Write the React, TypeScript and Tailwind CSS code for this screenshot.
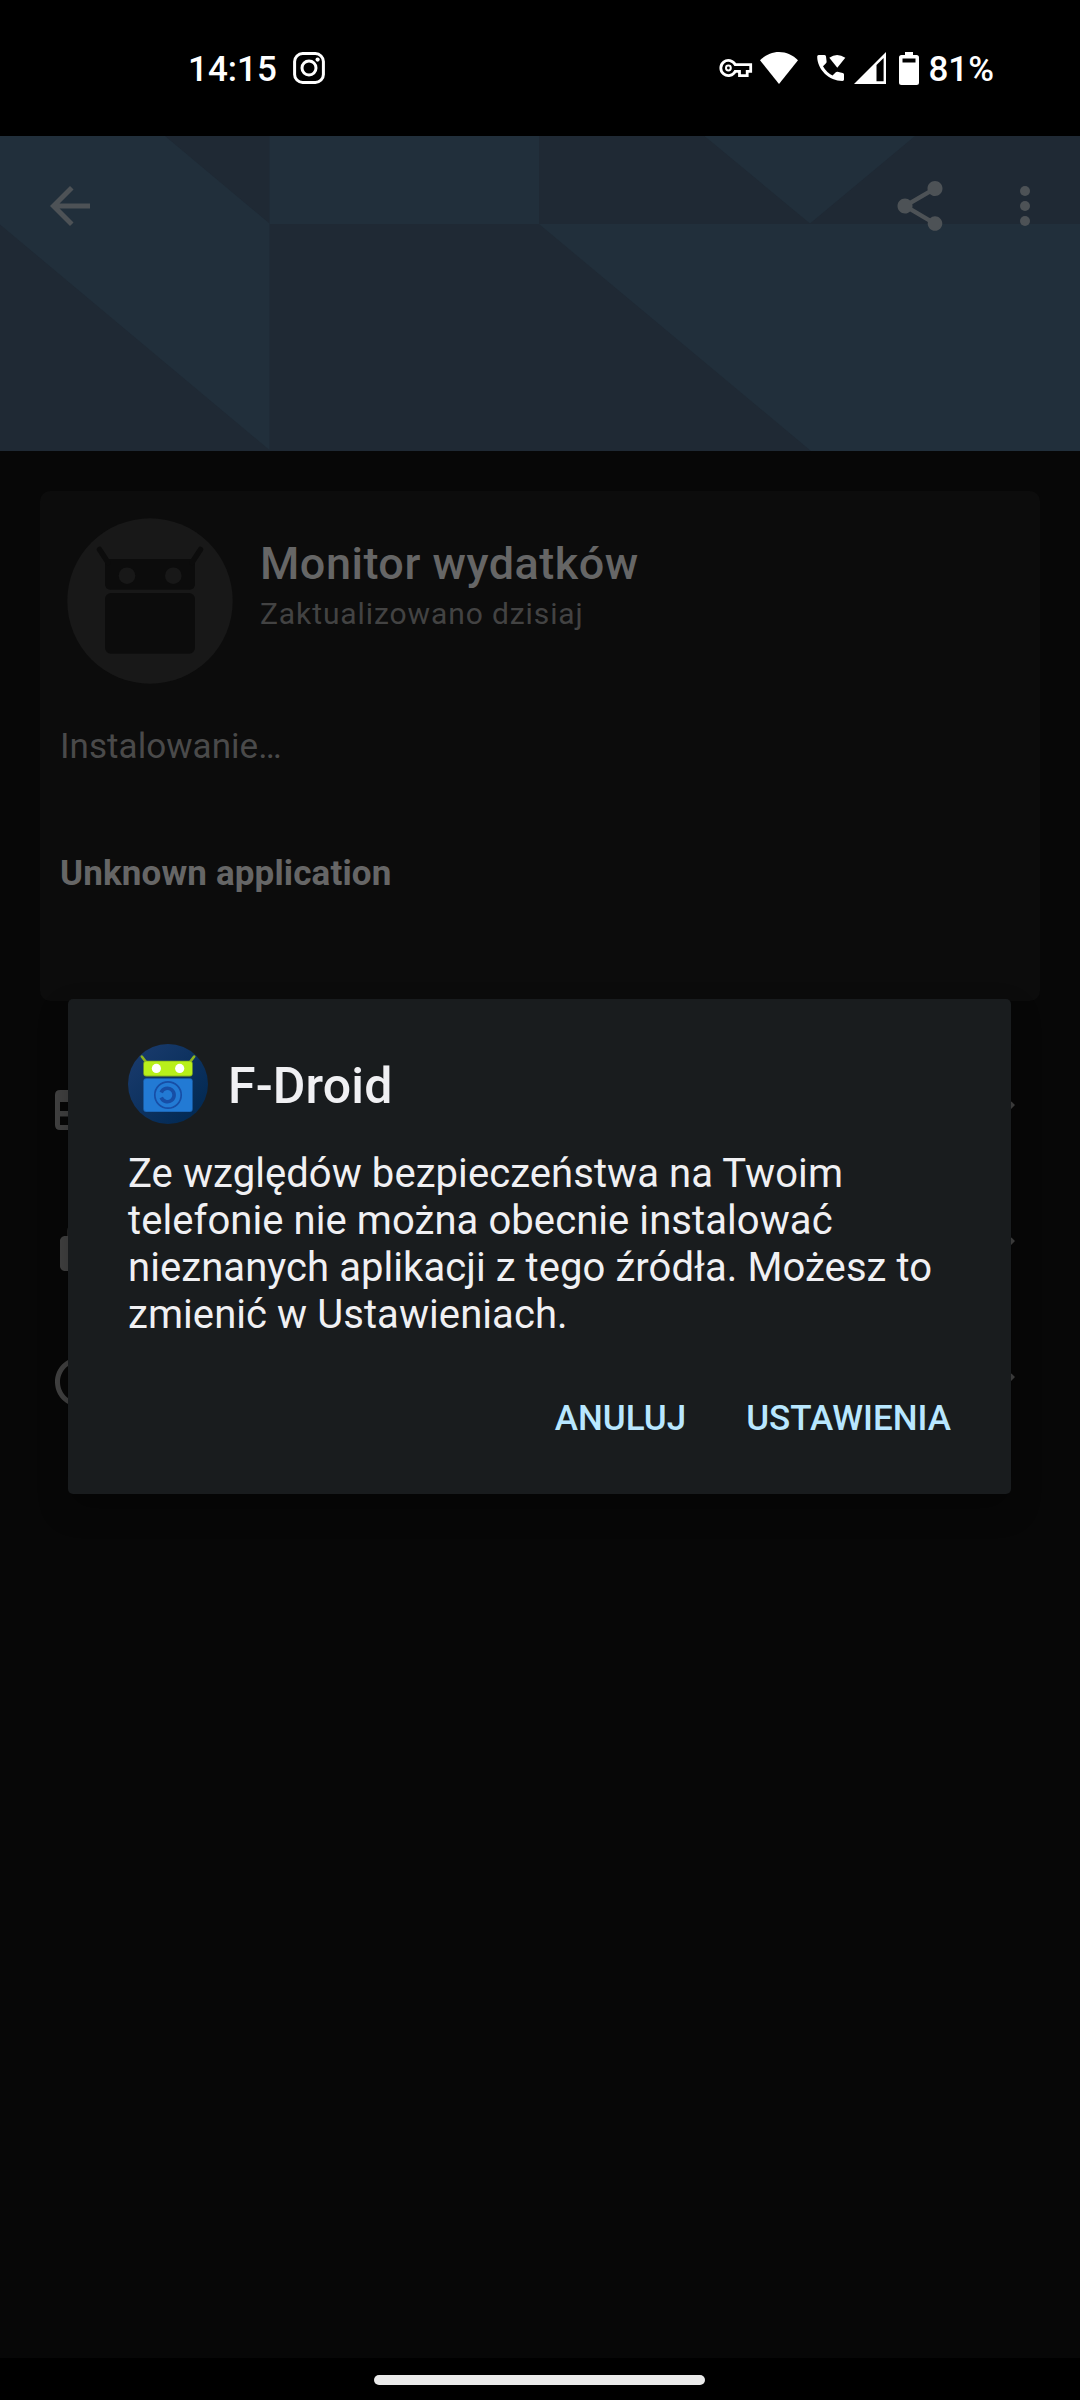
import React from "react";

const ICON = "h-[60px] w-[60px] shrink-0";

function StatusBar() {
  return (
    <header className="flex h-[136px] shrink-0 items-center bg-black pl-[188px] pr-[86px] text-[35px] font-medium text-white">
      <span className="relative top-[2px] w-[105px] leading-[42px]">14:15</span>
      <svg className="h-8 w-8" viewBox="0 0 32 32" fill="none" stroke="currentColor">
        <rect x="1.6" y="1.6" width="28.8" height="28.8" rx="8" strokeWidth="3" />
        <circle cx="16" cy="16" r="7" strokeWidth="3" />
        <circle cx="24.6" cy="7.6" r="2.1" fill="currentColor" stroke="none" />
      </svg>
      <div className="ml-auto flex items-center">
        <svg className="mr-[7px] h-[20px] w-[34px]" viewBox="0 0 34 20" fill="none" stroke="currentColor" strokeWidth="2.8">
          <path d="M16.2 6.6A7.6 7.6 0 1 0 16.2 13.4H20.5V17.7H28.2V13.4H31.7V6.6Z" />
          <circle cx="9.4" cy="10" r="2.4" strokeWidth="2" />
        </svg>
        <svg className="mr-[19px] h-[32px] w-[38px]" viewBox="0 0 38 32" fill="currentColor">
          <path d="M0 8.2C5 3.300 11.600 0 19 0s14 3.300 19 8.200L19 32Z" />
        </svg>
        <svg className="mr-[8px] h-[28px] w-[29px]" viewBox="0 0 29 28" fill="currentColor">
          <path d="M1.600 1H7.500Q9 1 9 2.500L9.600 7.500Q9.700 8.500 9 9.200L6 12.200A23 23 0 0 0 15.500 21.500L18.800 18.300Q19.500 17.600 20.500 17.800L25.700 18.900Q27 19.100 27 20.500V25.600Q27 27 25.500 27C12 27 .2 15.500.2 2.500Q.2 1 1.600 1Z" />
          <path d="M12.300 3.800Q20 -1.800 28.300 3.800L20.300 13.800Z" />
        </svg>
        <svg className="mr-[13px] h-[32px] w-[32px]" viewBox="0 0 32 32">
          <path d="M0 32L32 0V32Z" fill="currentColor" />
          <path d="M22.500 13L29.600 6V29.200H22.500Z" fill="#000" />
        </svg>
        <svg className="mr-[9px] h-[33px] w-[20px]" viewBox="0 0 20 33">
          <path d="M6 0h8v3h3.500Q20 3 20 5.500v25Q20 33 17.500 33h-15Q0 33 0 30.500v-25Q0 3 2.500 3H6Z" fill="currentColor" />
          <path d="M3.500 6.500h13v4h-13z" fill="#000" />
        </svg>
        <span className="relative top-[2px] leading-[42px]">81%</span>
      </div>
    </header>
  );
}

function Banner() {
  return (
    <div className="relative h-[315px] shrink-0 overflow-hidden bg-[#1f2934]">
      <svg className="absolute inset-0 h-[315px] w-[1080px]" viewBox="0 136 1080 315" fill="#212f3b">
        <path d="M0 136H165L269.500 223.500V450L0 224.500Z" />
        <path d="M269.500 136H539V224H269.500Z" />
        <path d="M704.500 136H915L810 223.500Z" />
        <path d="M539 224H1080V451H811Z" />
      </svg>
      <div className="relative flex h-[140px] items-center pl-10 pr-[25px] text-[#4d5256]">
        <svg className={ICON} viewBox="0 0 24 24" fill="currentColor">
          <path d="M20 11H7.830l5.590-5.590L12 4l-8 8 8 8 1.410-1.410L7.830 13H20v-2z" />
        </svg>
        <svg className={ICON + " ml-auto"} viewBox="0 0 24 24" fill="currentColor">
          <path d="M18 16.080c-.76 0-1.440.3-1.960.77L8.910 12.700c.05-.23.09-.46.09-.7s-.04-.47-.09-.7l7.050-4.110c.54.5 1.250.81 2.040.81 1.660 0 3-1.340 3-3s-1.340-3-3-3-3 1.340-3 3c0 .24.04.47.09.7L8.040 9.810C7.500 9.310 6.790 9 6 9c-1.660 0-3 1.340-3 3s1.340 3 3 3c.79 0 1.500-.31 2.040-.81l7.120 4.160c-.05.21-.08.43-.08.65 0 1.610 1.310 2.920 2.920 2.920s2.920-1.310 2.920-2.920-1.310-2.920-2.920-2.920z" />
        </svg>
        <svg className={ICON + " ml-[45px]"} viewBox="0 0 24 24" fill="currentColor">
          <circle cx="12" cy="6" r="2" />
          <circle cx="12" cy="12" r="2" />
          <circle cx="12" cy="18" r="2" />
        </svg>
      </div>
    </div>
  );
}

function AppCard() {
  return (
    <section className="mx-10 mt-10 h-[510px] shrink-0 rounded-[10px] bg-[#0c0c0c] text-[#666]">
      <div className="flex pl-[27px] pt-[27px]">
        <svg className="h-[166px] w-[166px]" viewBox="67 518 166 166">
          <circle cx="150" cy="601" r="82.700" fill="#181818" />
          <g fill="#0c0c0c">
            <path d="M105 559H195V584Q195 589.700 189.500 589.700H110.500Q105 589.700 105 584Z" />
            <rect x="105" y="593" width="90" height="60.700" rx="6" />
            <path d="M99.500 549.500L108 562.500M200.500 549.500L192 562.500" stroke="#0c0c0c" strokeWidth="5.500" strokeLinecap="round" />
          </g>
          <circle cx="127" cy="575.700" r="8.300" fill="#181818" />
          <circle cx="173.300" cy="575.700" r="8.300" fill="#181818" />
        </svg>
        <div className="pl-[27px] pt-[20px]">
          <h1 className="text-[45px] font-medium leading-[52px] tracking-[0.5px]">Monitor wydatków</h1>
          <p className="mt-[6px] text-[30px] leading-[36px] tracking-[0.9px] text-[#434343]">Zaktualizowano dzisiaj</p>
        </div>
      </div>
      <div className="pl-5 pt-[42px] text-[35px] leading-[42px]">
        <p className="tracking-[0.05px] text-[#4a4a4a]">Instalowanie…</p>
        <p className="mt-[85px] font-bold tracking-[0.14px]">Unknown application</p>
      </div>
    </section>
  );
}

const ROW_ICONS = [
  <path key="list" fillRule="evenodd" d="M4 4h16q2 0 2 2v12q0 2-2 2H4q-2 0-2-2V6q0-2 2-2ZM4 8.800v3.600h16V8.800ZM4 14.600v3.400h16v-3.400Z" />,
  <path key="lock" d="M18 8h-1V6c0-2.760-2.240-5-5-5S7 3.240 7 6v2H6c-1.100 0-2 .9-2 2v10c0 1.100.9 2 2 2h12c1.100 0 2-.9 2-2V10c0-1.100-.9-2-2-2zM9 6c0-1.660 1.340-3 3-3s3 1.340 3 3v2H9V6z" />,
  <path key="clock" d="M12 2C6.480 2 2 6.480 2 12s4.480 10 10 10 10-4.480 10-10S17.520 2 12 2zm0 18c-4.420 0-8-3.580-8-8s3.580-8 8-8 8 3.580 8 8-3.580 8-8 8zm.5-13H11v6l5.250 3.150.75-1.230-4.500-2.670z" />,
];

function DetailRows() {
  return (
    <div className="mt-[41px] flex flex-col">
      {ROW_ICONS.map((icon, i) => (
        <div key={i} className="flex h-[136px] items-center justify-between pl-[50px] pr-[50px] text-[#434343]">
          <svg className={ICON} viewBox="0 0 24 24" fill="currentColor">{icon}</svg>
          <svg className={ICON} viewBox="0 0 24 24" fill="currentColor">
            <path d="M16.590 8.590L12 13.170 7.410 8.590 6 10l6 6 6-6z" />
          </svg>
        </div>
      ))}
    </div>
  );
}

function FDroidIcon() {
  return (
    <svg className="h-20 w-20 shrink-0" viewBox="0 0 80 80">
      <defs>
        <linearGradient id="disc" x1="0" y1="0" x2="1" y2="1">
          <stop offset="0.15" stopColor="#17396a" />
          <stop offset="0.85" stopColor="#032a54" />
        </linearGradient>
      </defs>
      <circle cx="40" cy="40" r="40" fill="url(#disc)" />
      <path d="M13.800 12.500L18 18M66.200 12.500L62 18" stroke="#8eb41e" strokeWidth="2.600" strokeLinecap="round" />
      <rect x="15.300" y="16.700" width="49.400" height="15.800" rx="3" fill="#8bb71c" />
      <rect x="16" y="17.400" width="48" height="14.200" rx="2.500" fill="#b8f01a" />
      <circle cx="28.400" cy="24.400" r="4.600" fill="#fff" />
      <circle cx="51.700" cy="24.400" r="4.600" fill="#fff" />
      <rect x="15.300" y="34.200" width="49.400" height="33.800" rx="3" fill="#1d68b8" />
      <rect x="16" y="35" width="48" height="32" rx="2.500" fill="#227ad4" />
      <g fill="none" stroke="#174ea6">
        <circle cx="40" cy="51" r="13.200" strokeWidth="1.700" />
        <path d="M33.200 48.500A6.700 6.700 0 1 1 33.200 53.500" strokeWidth="3.600" />
      </g>
    </svg>
  );
}

function InstallDialog() {
  return (
    <div
      role="dialog"
      className="absolute left-[68px] top-[999px] flex h-[495px] w-[943px] flex-col rounded-[5px] bg-[#191c1e] pl-[60px] pr-[60px] pt-[45px] text-[#f0f0f3] shadow-[0_14px_30px_rgba(0,0,0,0.3)]"
    >
      <div className="flex items-center gap-5">
        <FDroidIcon />
        <h2 className="relative top-[2px] text-[50px] font-medium leading-[58px] tracking-[0.15px]">F-Droid</h2>
      </div>
      <p className="mt-[26px] whitespace-nowrap text-[40px] leading-[47px] tracking-[0.07px]">
        Ze względów bezpieczeństwa na Twoim
        <br />
        telefonie nie można obecnie instalować
        <br />
        nieznanych aplikacji z tego źródła. Możesz to
        <br />
        zmienić w Ustawieniach.
      </p>
      <div className="mt-[60px] flex justify-end gap-[60px] text-[35px] font-medium leading-[42px] text-[#b8e7ff]">
        <button>ANULUJ</button>
        <button>USTAWIENIA</button>
      </div>
    </div>
  );
}

export default function App() {
  return (
    <main className="relative flex h-[2400px] w-[1080px] flex-col overflow-hidden bg-[#070707] font-['Roboto',sans-serif]">
      <StatusBar />
      <Banner />
      <AppCard />
      <DetailRows />
      <footer className="mt-auto flex h-[42px] shrink-0 bg-black pl-[374px] pt-[17px]">
        <div className="h-[10px] w-[331px] rounded-full bg-[#ebebeb]" />
      </footer>
      <InstallDialog />
    </main>
  );
}
